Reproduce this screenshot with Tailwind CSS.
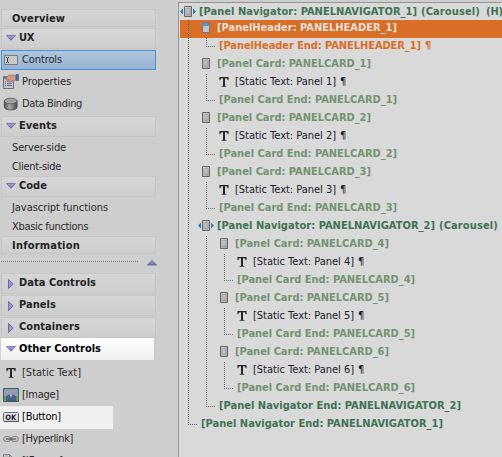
<!DOCTYPE html>
<html lang="en">
<head>
<meta charset="utf-8">
<title>UX Builder</title>
<script src="https://cdn.jsdelivr.net/npm/@tailwindcss/browser@4"></script>
</head>
<body class="w-[502px] h-[457px] overflow-hidden bg-[#cecece] text-[11px] leading-[18px] text-[#292929] font-['DejaVu_Sans_Condensed','DejaVu_Sans',sans-serif] [font-stretch:condensed]">
<svg class="absolute w-0 h-0">
  <defs>
    <linearGradient id="tri" x1="0" y1="0" x2="0" y2="1"><stop offset="0" stop-color="#a9a9dc"/><stop offset="1" stop-color="#6666b4"/></linearGradient>
    <linearGradient id="gray" x1="0" y1="0" x2="1" y2="1"><stop offset="0" stop-color="#d0d0d0"/><stop offset="1" stop-color="#a9a9a9"/></linearGradient>
    <linearGradient id="db" x1="0" y1="0" x2="1" y2="0"><stop offset="0" stop-color="#4c4c4c"/><stop offset=".4" stop-color="#a8a8a8"/><stop offset="1" stop-color="#484848"/></linearGradient>
    <symbol id="down" viewBox="0 0 10 6"><path d="M.5.5h9L5 5.3z" fill="url(#tri)" stroke="#6868a8" stroke-width=".8"/></symbol>
    <symbol id="up" viewBox="0 0 10 6"><path d="M.5 5h9L5 .5z" fill="url(#tri)" stroke="#6060a0" stroke-width=".8"/></symbol>
    <symbol id="right" viewBox="0 0 6 10"><path d="M.5.5v9L5.2 5z" fill="#9696d0" stroke="#6464a4" stroke-width=".9"/></symbol>
    <symbol id="input" viewBox="0 0 16 16"><path d="M1.500 3.500h13v9h-13z" fill="#c9c9c9" stroke="#777b80"/><path d="M3 5.500h1m1 0h1M4.500 6v4M3 10.500h1m1 0h1" stroke="#333" fill="none"/></symbol>
    <symbol id="props" viewBox="0 0 16 16"><path d="M.5 2.500h10v12H.5z" fill="#c4c8d2" stroke="#686e80"/><path d="M1 3h9v2H1z" fill="#727ca0"/><path d="M2 7.500h1m1 0h5M2 9.500h1m1 0h5M2 11.500h1m1 0h5" stroke="#636a80"/><path d="M3 4 6 1h5l2 1v4L9 7 7 8 4 7 6 5 3 6z" fill="#cf9982" stroke="#9a6b5c" stroke-width=".6"/><path d="M13 .5h2.500v6H13z" fill="#5169ad" stroke="#3b4d8b" stroke-width=".6"/></symbol>
    <symbol id="data" viewBox="0 0 16 16"><path d="M1.300 5v6c0 4 12.800 4 12.800 0V5z" fill="url(#db)" stroke="#444" stroke-width=".7"/><ellipse cx="7.700" cy="5" rx="6.400" ry="2.800" fill="#a2a2a2" stroke="#555" stroke-width=".8"/></symbol>
    <symbol id="tee" viewBox="0 0 11 12"><path d="M.5.5h10V4H9.500Q9.300 1.800 8 1.800H6.600V9.500q0 1 1.600 1.100v.7H2.800v-.7q1.600-.1 1.600-1.100V1.800H3Q1.700 1.800 1.500 4h-1z" fill="#262626"/></symbol>
    <symbol id="image" viewBox="0 0 16 14"><path d="M.5.5h15v13H.5z" fill="#839fc8" stroke="#47604c"/><path d="M1 8h14v5H1z" fill="#6c9854"/><path d="M3.500 13V9q1-2 3-2h3q2 0 3 2v4z" fill="#425f9a" stroke="#344979" stroke-width=".5"/><path d="m7 7 1 3 1-3z" fill="#d5d8e3"/><ellipse cx="8" cy="4.500" rx="2.100" ry="2.900" fill="#bf9384"/></symbol>
    <symbol id="ok" viewBox="0 0 16 10"><rect x=".5" y=".5" width="15" height="9" rx="1" fill="#e1e1ea" stroke="#666675"/><path d="M1 9.400h14.500V2" stroke="#50505f" fill="none"/><text x="2.300" y="7.900" font-size="7.500" font-weight="700" textLength="11" fill="#222">OK</text></symbol>
    <symbol id="link" viewBox="0 0 16 8"><g fill="none" stroke="#777"><rect x=".7" y="1.500" width="7" height="5" rx="2.500"/><rect x="8.300" y="1.500" width="7" height="5" rx="2.500"/><path d="M3 4h10" stroke="#666" stroke-width="1.500"/></g></symbol>
    <symbol id="page" viewBox="0 0 12 14"><path d="M.5.5h6l4 4v9H.5z" fill="#bdbdc0" stroke="#808085"/><path d="M6.500.5v4h4" fill="none" stroke="#808085"/></symbol>
    <symbol id="card" viewBox="0 0 8 11"><path d="M.5.5h7v10h-7z" fill="url(#gray)" stroke="#666"/><path d="M2 2.500h4v6H2z" fill="none" stroke="#999" stroke-width=".6"/></symbol>
    <symbol id="header" viewBox="0 0 8 11"><path d="M.5.5h7v10h-7z" fill="#c5c5c5" stroke="#72777c"/><path d="M1 1h6v3H1z" fill="#6592c4"/></symbol>
    <symbol id="nav" viewBox="0 0 16 11"><path d="M3 2.500v6L0 5.500zM13 2.500v6l3-3z" fill="#287bbf"/><path d="M4.500.5h7v10h-7z" fill="url(#gray)" stroke="#666"/><path d="M6 2.500h4v6H6z" fill="none" stroke="#999" stroke-width=".6"/></symbol>
  </defs>
</svg>
<div class="flex h-[457px]">
  <aside id="side" class="w-[178px] shrink-0 h-[457px] overflow-hidden pt-[9px]"></aside>
  <main class="relative mt-[2px] h-[455px] flex-1 overflow-hidden border-l border-t border-[#969696] bg-[#d9d9d9] pl-px">
    <div id="tree"></div>
    <svg class="absolute left-[-1px] top-[-1px] w-[324px] h-[455px]" viewBox="178 2 324 455" fill="none" stroke="#666" stroke-dasharray="1 1">
      <path d="M188.500 20V424M188 424.500H197"/>
      <path d="M206.500 38V46M206 46.500H215M206.500 74V100M206 100.500H215M206.500 128V154M206 154.500H215M206.500 182V208M206 208.500H215M206.500 236V406M206 406.500H215"/>
      <path d="M224.500 254V280M224 280.500H233M224.500 308V334M224 334.500H233M224.500 362V388M224 388.500H233"/>
    </svg>
  </main>
</div>
<script>
const icon = (id, cls) => `<svg class="shrink-0 ${cls}"><use href="#${id}"/></svg>`;
const label = (text, width, cls = '') => `<span class="block shrink-0 whitespace-pre ${cls}" data-w="${width}">${text}</span>`;

const boxStyle = 'ml-px flex w-[155px] items-center border border-[#c6c6c6] bg-linear-to-b from-[#d6d6d6] to-[#cdcdcd] font-bold text-[#242424]';
const title = (text, w) => `<div class="${boxStyle} h-[18px] pl-[10px] pt-[2px]">${label(text, w)}</div>`;
const group = (text, w, arrow, cls) => `<div class="${boxStyle} h-[21px] pb-[2px] ${cls}">${arrow === 'down' ? icon('down', 'ml-[4px] mr-[3px] w-[10px] h-[6px]') : icon('right', 'mt-[2px] ml-[6px] mr-[5px] w-[6px] h-[10px]')}${label(text, w)}</div>`;
const item = (id, size, text, w, cls = 'pt-[2px]') => `<div class="flex h-[22px] items-center ${cls}"><span class="flex w-[22px] shrink-0 items-center pl-[3px]">${icon(id, size)}</span>${label(text, w)}</div>`;
const plain = (text, w, cls) => `<div class="flex items-center pl-[12px] ${cls}">${label(text, w)}</div>`;

document.getElementById('side').innerHTML = [
  title('Overview', 53),
  group('UX', 15, 'down', 'mt-px'),
  `<div class="ml-px mt-px flex h-[20px] w-[155px] items-center border border-[#4a90d6] bg-linear-to-b from-[#b0c5dc] to-[#96b3d4]"><span class="w-[20px] shrink-0 pl-px">${icon('input', 'w-[16px] h-[16px]')}</span>${label('Controls', 40)}</div>`,
  item('props', 'w-[16px] h-[16px]', 'Properties', 49),
  item('data', 'w-[16px] h-[16px]', 'Data Binding', 60),
  group('Events', 38, 'down', 'mt-[2px]'),
  plain('Server-side', 54, 'mt-[1px] h-[19px]'),
  plain('Client-side', 49, 'h-[19px]'),
  group('Code', 28, 'down', ''),
  plain('Javascript functions', 96, 'mt-[1px] h-[19px]'),
  plain('Xbasic functions', 76, 'h-[19px]'),
  title('Information', 68),
  `<div class="flex h-[19px] items-start pt-[6px]">
     <svg class="ml-px w-[137px] h-[3px]"><path d="M0 1.500H137" stroke="#777" stroke-dasharray="1 1"/></svg>${icon('up', 'ml-[9px] w-[10px] h-[6px]')}
   </div>`,
  group('Data Controls', 77, 'right', ''),
  group('Panels', 37, 'right', 'mt-px'),
  group('Containers', 61, 'right', 'mt-px'),
  `<div class="ml-px flex h-[22px] w-[155px] border-r-2 border-[#cacaca]"><div class="flex w-[153px] items-center bg-linear-to-b from-white to-[#eeeeee] font-bold text-black">${icon('down', 'ml-[5px] mr-[3px] w-[10px] h-[6px]')}${label('Other Controls', 82)}</div></div>`,
  item('tee', 'ml-[3px] w-[10px] h-[12px]', '[Static Text]', 59, 'mt-px pt-[2px]'),
  item('image', 'w-[16px] h-[14px]', '[Image]', 37),
  `<div class="mt-px -mb-[2px] w-[113px] bg-[#f0f0f0] pb-px text-black">${item('ok', 'w-[16px] h-[10px]', '[Button]', 39, '')}</div>`,
  item('link', 'w-[16px] h-[8px]', '[Hyperlink]', 51),
  item('page', 'w-[12px] h-[14px]', '[IFrame]', 41),
].join('');

const green = 'font-bold text-[#3f7353]', sage = 'font-bold text-[#739372]';
const indents = ['', 'pl-[18px]', 'pl-[36px]'];
const mark = cls => `<span class="ml-[4px] ${cls}">¶</span>`;
const row = (depth, content, cls = 'h-[18px] pb-[3px]') => `<div class="flex items-center ${cls}"><div class="flex items-center ${indents[depth]}">${content}</div></div>`;
const navIcon = icon('nav', 'mr-[3px] w-[16px] h-[11px]');
const nav = (d, n, cls) => row(d, navIcon + label(`[Panel Navigator: PANELNAVIGATOR_${n}]`, 218, green) + label('(Carousel)', 59, green + ' ml-[4px]') + label('(H)', 17, green + ' ml-[6px]'), cls);
const card = (d, n) =>
  row(d, icon('card', 'ml-[4px] mr-[7px] w-[8px] h-[11px]') + label(`[Panel Card: PANELCARD_${n}]`, 154, sage)) +
  row(d, icon('tee', 'ml-[21px] mr-[6px] w-[10px] h-[12px]') + label(`[Static Text: Panel ${n}]`, 101, 'text-[#202028]') + mark('text-[#202028]')) +
  row(d, label(`[Panel Card End: PANELCARD_${n}]`, 178, sage + ' ml-[21px]'));

document.getElementById('tree').innerHTML =
  nav(0, 1, 'h-[17px]') +
  row(1, icon('header', 'ml-[4px] mr-[7px] w-[8px] h-[11px]') + label('[PanelHeader: PANELHEADER_1]', 180, 'font-bold text-[#e4dfdb]'), 'h-[18px] pb-[3px] bg-[#d96f27]') +
  row(1, label('[PanelHeader End: PANELHEADER_1]', 202, 'ml-[21px] font-bold text-[#d96f27]') + mark('font-bold text-[#d96f27]')) +
  card(1, 1) + card(1, 2) + card(1, 3) +
  nav(1, 2) +
  card(2, 4) + card(2, 5) + card(2, 6) +
  row(1, label('[Panel Navigator End: PANELNAVIGATOR_2]', 242, green + ' ml-[21px]')) +
  row(0, label('[Panel Navigator End: PANELNAVIGATOR_1]', 242, green + ' ml-[21px]'));

function fit() {
  const labels = [...document.querySelectorAll('[data-w]')];
  labels.forEach(el => { el.style.letterSpacing = '0px'; el.style.width = 'max-content'; });
  const widths = labels.map(el => el.getBoundingClientRect().width);
  labels.forEach((el, i) => {
    const target = +el.dataset.w;
    el.style.letterSpacing = (target - widths[i]) / el.textContent.length + 'px';
    el.style.width = target + 'px';
  });
}
fit();
window.addEventListener('load', () => { fit(); document.fonts.ready.then(fit); });
</script>
</body>
</html>
